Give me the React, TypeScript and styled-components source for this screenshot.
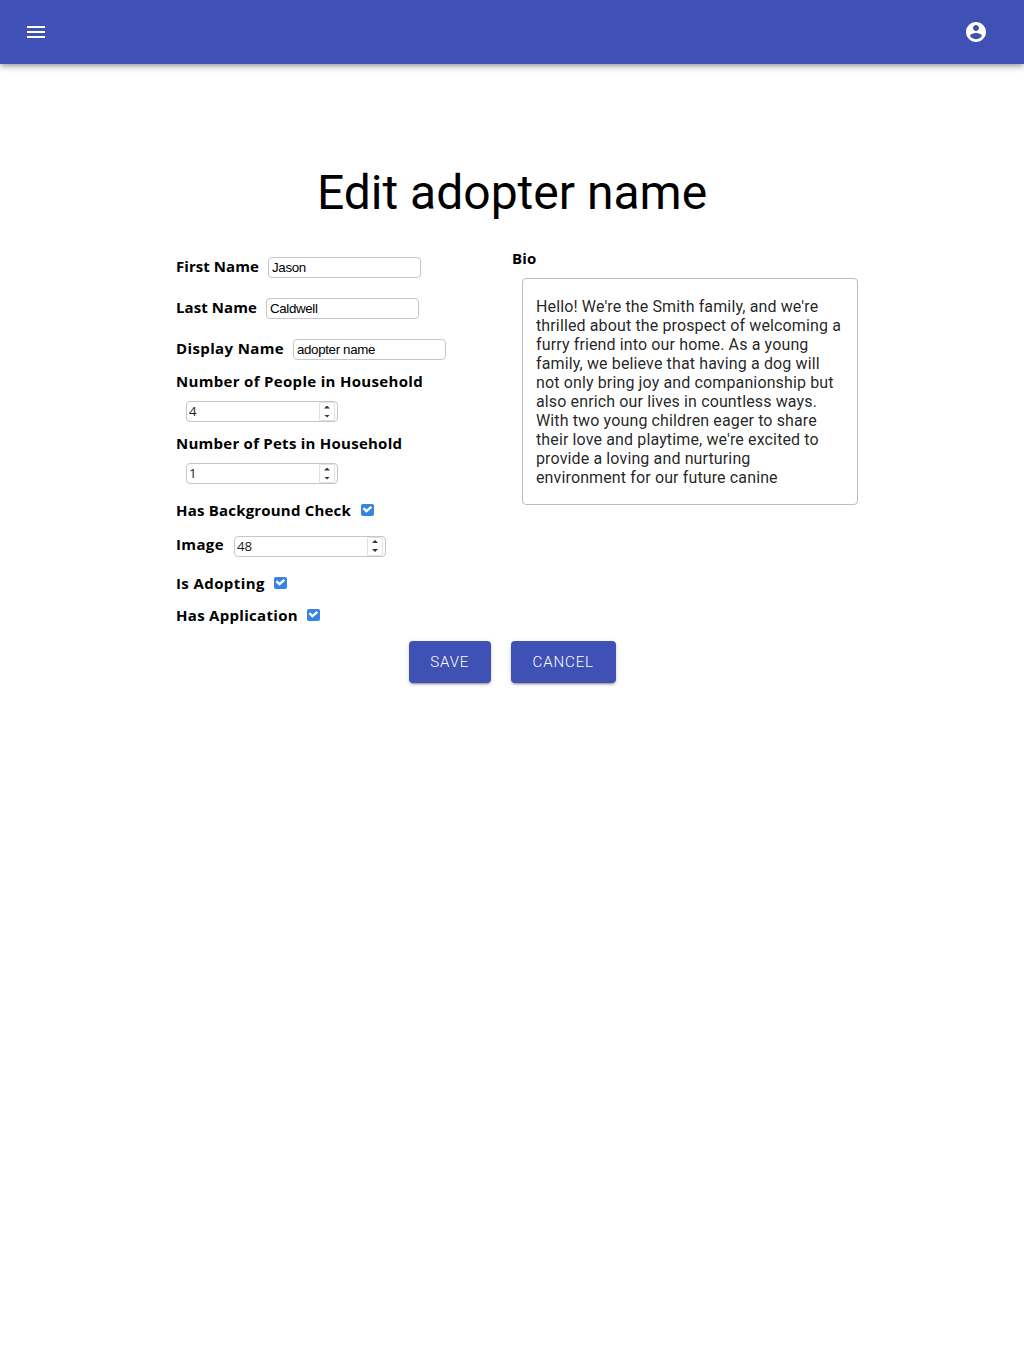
import React from "react";
import styled, { createGlobalStyle } from "styled-components";

const GlobalStyle = createGlobalStyle`
  *, *::before, *::after { box-sizing: border-box; }
  body {
    margin: 0;
    background: #fff;
    color: #000;
    font-family: Roboto, "Liberation Sans", sans-serif;
  }
`;

const Page = styled.div`
  min-height: 100vh;
`;

const TopBar = styled.header`
  display: flex;
  align-items: center;
  justify-content: space-between;
  height: 64px;
  padding: 0 24px;
  background: #3f51b5;
  color: #fff;
  box-shadow: 0 2px 4px -1px rgba(0, 0, 0, 0.2), 0 4px 5px 0 rgba(0, 0, 0, 0.14),
    0 1px 10px 0 rgba(0, 0, 0, 0.12);
`;

const IconButton = styled.button<{ $end?: boolean }>`
  display: flex;
  padding: 0;
  margin-right: ${(p) => (p.$end ? "12px" : "0")};
  border: 0;
  background: none;
  color: inherit;
`;

const Title = styled.h1`
  margin: 97px 0 0;
  height: 64px;
  font-size: 48px;
  font-weight: 400;
  line-height: 64px;
  text-align: center;
`;

const Columns = styled.div`
  display: flex;
  width: 672px;
  margin: 22px auto 0;
`;

const Column = styled.div`
  display: flex;
  flex-direction: column;
  width: 336px;
`;

const Row = styled.div<{ $height: number }>`
  display: flex;
  align-items: center;
  height: ${(p) => p.$height}px;
`;

const Stack = styled.div`
  display: flex;
  flex-direction: column;
  height: 62px;
`;

const Label = styled.label<{ $width: number; $spacing?: number; $lift?: number }>`
  flex: none;
  width: ${(p) => p.$width}px;
  height: 22px;
  margin-bottom: ${(p) => (p.$lift ?? 0) * 2}px;
  font-family: "Open Sans", "Noto Sans", sans-serif;
  font-size: 15px;
  font-weight: 700;
  line-height: 22px;
  letter-spacing: ${(p) => p.$spacing ?? 0.15}px;
  white-space: nowrap;
`;

const Field = styled.div<{ $left?: number; $top?: number }>`
  display: flex;
  flex: none;
  width: 153px;
  height: 21px;
  margin: ${(p) => p.$top ?? 0}px 0 0 ${(p) => p.$left ?? 9}px;
  border: 1px solid #c6c6c6;
  border-radius: 4px;
  background: #fff;
`;

const Input = styled.input`
  flex: 1;
  min-width: 0;
  padding: 0 3px;
  border: 0;
  outline: 0;
  background: none;
  color: #000;
  font: 13.333px/19px "Liberation Sans", Arial, sans-serif;
  letter-spacing: -0.35px;
`;

const NumberField = styled(Field)`
  width: 152px;
  padding-right: 2px;
`;

const NumberInput = styled(Input)`
  height: 18px;
  padding: 0 2px;
  color: #222;
  font-family: "Open Sans", "Noto Sans", sans-serif;
  line-height: 18px;
  letter-spacing: -0.2px;
`;

const Spinner = styled.span`
  display: flex;
  flex-direction: column;
  align-items: center;
  justify-content: center;
  gap: 6px;
  width: 16px;
  border: 1px solid #e2e2e2;
  border-radius: 1px;
`;

const Arrow = styled.span<{ $down?: boolean }>`
  width: 6px;
  height: 3px;
  background: #2e3436;
  clip-path: ${(p) =>
    p.$down ? "polygon(0 0, 100% 0, 50% 100%)" : "polygon(50% 0, 100% 100%, 0 100%)"};
`;

const Box = styled.span<{ $left?: number }>`
  display: flex;
  width: 12.5px;
  height: 12px;
  margin-left: ${(p) => p.$left ?? 10}px;
  border-radius: 2px;
  background: #3584e4;
`;

const BioText = styled.div`
  width: 336px;
  height: 227px;
  margin: 9px 0 0 10px;
  padding: 18px 13px;
  border: 1px solid #bdbdbd;
  border-radius: 4px;
  color: rgba(0, 0, 0, 0.87);
  font-size: 16px;
  line-height: 19px;
  letter-spacing: 0.13px;
  white-space: pre;
`;

const Actions = styled.div`
  display: flex;
  justify-content: center;
  gap: 20px;
  margin-top: 11px;
`;

const Button = styled.button<{ $width: number }>`
  width: ${(p) => p.$width}px;
  height: 42px;
  padding: 0;
  border: 0;
  border-radius: 4px;
  background: #3f51b5;
  color: #fff;
  font-family: Roboto, sans-serif;
  font-size: 15px;
  font-weight: 300;
  line-height: 42px;
  letter-spacing: 0.9px;
  box-shadow: 0 3px 1px -2px rgba(0, 0, 0, 0.2), 0 2px 2px 0 rgba(0, 0, 0, 0.14),
    0 1px 5px 0 rgba(0, 0, 0, 0.12);
`;

function NumberBox({ value, left, top }: { value: string; left?: number; top?: number }) {
  return (
    <NumberField $left={left} $top={top}>
      <NumberInput defaultValue={value} inputMode="numeric" />
      <Spinner>
        <Arrow />
        <Arrow $down />
      </Spinner>
    </NumberField>
  );
}

function Check({ left }: { left?: number }) {
  return (
    <Box $left={left}>
      <svg width="12" height="12" viewBox="0 0 12 12" fill="none" stroke="#fff" strokeWidth="2.4">
        <path d="M2.4 4.200 5.400 7.200 10.400 2.800" />
      </svg>
    </Box>
  );
}

export default function App() {
  return (
    <Page>
      <GlobalStyle />
      <TopBar>
        <IconButton aria-label="Menu">
          <svg width="24" height="24" viewBox="0 0 24 24" fill="currentColor">
            <path d="M3 18h18v-2H3v2zm0-5h18v-2H3v2zm0-7v2h18V6H3z" />
          </svg>
        </IconButton>
        <IconButton aria-label="Account" $end>
          <svg width="24" height="24" viewBox="0 0 24 24" fill="currentColor">
            <path d="M12 2C6.48 2 2 6.48 2 12s4.48 10 10 10 10-4.48 10-10S17.52 2 12 2zm0 3c1.66 0 3 1.34 3 3s-1.34 3-3 3-3-1.34-3-3 1.34-3 3-3zm0 14.200c-2.500 0-4.710-1.280-6-3.220.03-1.990 4-3.080 6-3.080 1.990 0 5.970 1.090 6 3.080-1.290 1.940-3.500 3.220-6 3.220z" />
          </svg>
        </IconButton>
      </TopBar>
      <Title>Edit adopter name</Title>
      <Columns>
        <Column>
          <Row $height={41}>
            <Label $width={83} $spacing={0.05} $lift={2}>
              First Name
            </Label>
            <Field>
              <Input defaultValue="Jason" />
            </Field>
          </Row>
          <Row $height={41}>
            <Label $width={81} $spacing={0.08} $lift={2}>
              Last Name
            </Label>
            <Field>
              <Input defaultValue="Caldwell" />
            </Field>
          </Row>
          <Row $height={41}>
            <Label $width={108} $spacing={0.38} $lift={2}>
              Display Name
            </Label>
            <Field>
              <Input defaultValue="adopter name" />
            </Field>
          </Row>
          <Stack>
            <Label $width={248} $spacing={0.32}>
              Number of People in Household
            </Label>
            <NumberBox value="4" left={10} top={9} />
          </Stack>
          <Stack>
            <Label $width={248} $spacing={0.25}>
              Number of Pets in Household
            </Label>
            <NumberBox value="1" left={10} top={9} />
          </Stack>
          <Row $height={32}>
            <Label $width={175} $spacing={0.2}>
              Has Background Check
            </Label>
            <Check />
          </Row>
          <Row $height={40}>
            <Label $width={48} $spacing={0.35} $lift={2}>
              Image
            </Label>
            <NumberBox value="48" left={10} />
          </Row>
          <Row $height={34}>
            <Label $width={89} $spacing={0.4}>
              Is Adopting
            </Label>
            <Check left={9.4} />
          </Row>
          <Row $height={30}>
            <Label $width={122} $spacing={0.3}>
              Has Application
            </Label>
            <Check left={9.4} />
          </Row>
        </Column>
        <Column>
          <Label $width={60}>Bio</Label>
          <BioText>
            {`Hello! We're the Smith family, and we're
thrilled about the prospect of welcoming a
furry friend into our home. As a young
family, we believe that having a dog will
not only bring joy and companionship but
also enrich our lives in countless ways.
With two young children eager to share
their love and playtime, we're excited to
provide a loving and nurturing
environment for our future canine`}
          </BioText>
        </Column>
      </Columns>
      <Actions>
        <Button $width={82.5}>SAVE</Button>
        <Button $width={104.5}>CANCEL</Button>
      </Actions>
    </Page>
  );
}
